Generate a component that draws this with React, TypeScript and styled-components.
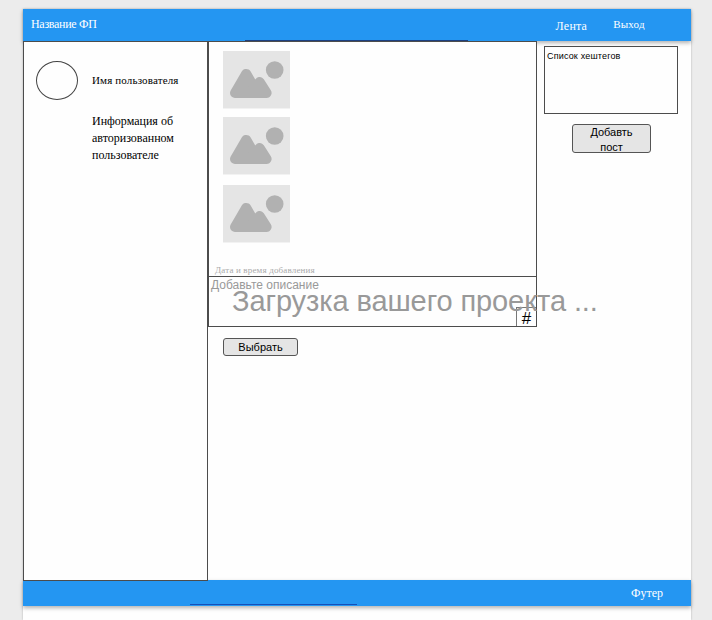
import React from 'react';
import styled, { createGlobalStyle } from 'styled-components';

const serif = '"Liberation Serif", "Times New Roman", serif';
const sans = '"Liberation Sans", Arial, sans-serif';
const line = '#4c4c4c';

const GlobalStyle = createGlobalStyle`
  * { box-sizing: border-box; }
  body { margin: 0; background: #ececec; overflow: hidden; }
`;

const Sheet = styled.div`
  position: relative;
  width: 668px;
  height: 611px;
  margin: 9px 0 0 23px;
  background: #fefefe;
  box-shadow: 0 0 2px rgba(0, 0, 0, 0.25);
  font-family: ${serif};
  color: #000;
`;

const Bar = styled.div<{ $height: number }>`
  position: relative;
  display: flex;
  align-items: flex-start;
  height: ${(p) => p.$height}px;
  background: #2496f2;
  box-shadow: 0 2px 4px rgba(0, 0, 0, 0.3);
`;

const Indicator = styled.span<{ $left: number; $width: number; $bottom: number; $color: string }>`
  position: absolute;
  bottom: ${(p) => p.$bottom}px;
  left: ${(p) => p.$left}px;
  width: ${(p) => p.$width}px;
  height: 1px;
  background: ${(p) => p.$color};
`;

const Label = styled.span<{
  $size: number;
  $top?: number;
  $left?: number;
  $spacing?: number;
  $lead?: number;
  $color?: string;
  $sans?: boolean;
}>`
  display: block;
  white-space: pre;
  font-family: ${(p) => (p.$sans ? sans : serif)};
  font-size: ${(p) => p.$size}px;
  line-height: ${(p) => p.$lead ?? 16}px;
  letter-spacing: ${(p) => p.$spacing ?? 0}px;
  margin: ${(p) => p.$top ?? 0}px 0 0 ${(p) => p.$left ?? 0}px;
  color: ${(p) => p.$color ?? '#000'};
`;

const Columns = styled.div`
  position: relative;
  z-index: 1;
  display: grid;
  grid-template-columns: 185px 329px 154px;
  height: 539px;
`;

const Sidebar = styled.aside`
  display: grid;
  grid-template-columns: 68px 1fr;
  align-content: start;
  height: 540px;
  border: 1px solid ${line};
  background: #fefefe;
`;

const Avatar = styled.div`
  width: 42px;
  height: 39px;
  margin: 19px 0 0 12px;
  border: 1px solid #444;
  border-radius: 50%;
`;

const Feed = styled.main`
  display: flex;
  flex-direction: column;
  align-items: flex-start;
`;

const Post = styled.section`
  display: flex;
  flex-direction: column;
  width: 329px;
  height: 236px;
  padding: 9px 0 0 15px;
  border: 1px solid ${line};
  background: #fefefe;
`;

const Photos = styled.div`
  display: grid;
  grid-template-rows: 66px 68px 58px;
  height: 192px;
  margin-left: -1px;
`;

const Description = styled.section`
  display: flex;
  justify-content: space-between;
  width: 329px;
  height: 50px;
  border: 1px solid ${line};
  border-top: 0;
`;

const HashButton = styled.div`
  align-self: flex-end;
  display: flex;
  justify-content: center;
  width: 20px;
  height: 19px;
  border: solid #777;
  border-width: 1px 0 0 1px;
`;

const Button = styled.button<{ $width: number; $height: number; $top: number; $left: number; $lead: number }>`
  display: flex;
  justify-content: center;
  align-items: flex-start;
  width: ${(p) => p.$width}px;
  height: ${(p) => p.$height}px;
  margin: ${(p) => p.$top}px 0 0 ${(p) => p.$left}px;
  padding: 0;
  border: 1px solid #555;
  border-radius: 3px;
  background: #e5e5e5;
  color: #000;
  font: 11px/${(p) => p.$lead}px ${sans};
  text-align: center;
  white-space: pre-line;
`;

const RightColumn = styled.aside`
  display: flex;
  flex-direction: column;
  align-items: flex-start;
`;

const TagList = styled.div`
  width: 134px;
  height: 68px;
  margin: 5px 0 0 7px;
  border: 1px solid ${line};
`;

const LoadingText = styled.div`
  position: absolute;
  z-index: 2;
  top: 275px;
  left: 209px;
  font: 29px/34px ${sans};
  color: #999;
  white-space: pre;
  letter-spacing: -0.1px;
`;

const Placeholder = () => (
  <svg width="67" height="58" viewBox="0 0 67 58">
    <rect width="67" height="57.5" fill="#e5e5e5" />
    <circle cx="51.7" cy="19" r="8.8" fill="#b1b1b1" />
    <path
      d="M12 42L23.2 22.9L34.5 42ZM29 42L36.6 31L43.6 42Z"
      fill="#b1b1b1"
      stroke="#b1b1b1"
      strokeWidth="10"
      strokeLinejoin="round"
    />
  </svg>
);

export default function App() {
  return (
    <>
      <GlobalStyle />
      <Sheet>
        <Bar $height={32}>
          <Label $size={12} $top={7} $left={8} $spacing={-0.3} $color="#fff">Название ФП</Label>
          <Indicator $left={222} $width={223} $bottom={0} $color="#1b3f80" />
          <Label $size={12} $top={9} $left={459} $spacing={0.2} $color="#fff">Лента</Label>
          <Label $size={11} $top={7} $left={26} $spacing={0.2} $color="#fff">Выход</Label>
        </Bar>
        <Columns>
          <Sidebar>
            <Avatar />
            <Label $size={11} $top={30} $spacing={0.15}>Имя пользователя</Label>
            <span />
            <Label $size={12} $lead={17} $top={13}>
              {'Информация об\nавторизованном\nпользователе'}
            </Label>
          </Sidebar>
          <Feed>
            <Post>
              <Photos>
                <Placeholder />
                <Placeholder />
                <Placeholder />
              </Photos>
              <Label $size={9} $lead={12} $top={21} $left={-9} $spacing={0.16} $color="#aaa">Дата и время добавления</Label>
            </Post>
            <Description>
              <Label $sans $size={12} $lead={14} $top={1} $left={2} $color="#999">Добавьте описание</Label>
              <HashButton>
                <Label $sans $size={17} $lead={22}>#</Label>
              </HashButton>
            </Description>
            <Button $width={75} $height={18} $top={11} $left={15} $lead={17}>Выбрать</Button>
          </Feed>
          <RightColumn>
            <TagList>
              <Label $sans $size={9} $lead={12} $top={3} $left={2} $spacing={0.17}>Список хештегов</Label>
            </TagList>
            <Button $width={79} $height={29} $top={10} $left={35} $lead={14.5}>{'Добавть\nпост'}</Button>
          </RightColumn>
        </Columns>
        <Bar $height={26}>
          <Indicator $left={167} $width={167} $bottom={1} $color="#154fb8" />
          <Label $size={12} $top={5} $left={608} $color="#fff">Футер</Label>
        </Bar>
        <LoadingText>Загрузка вашего проекта ...</LoadingText>
      </Sheet>
    </>
  );
}
